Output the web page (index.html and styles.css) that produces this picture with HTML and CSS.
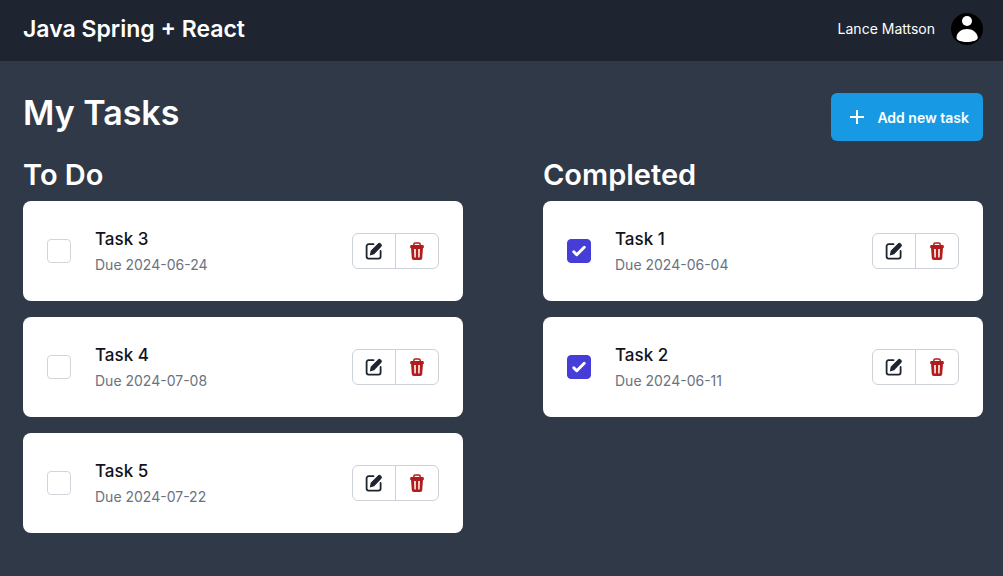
FILE: index.html
```html
<!DOCTYPE html>
<html lang="en">
<head>
  <meta charset="UTF-8" />
  <meta name="viewport" content="width=device-width, initial-scale=1.0"/>
  <title>My Tasks</title>
  <link rel="stylesheet" href="styles.css">
</head>
<body>
  <!-- shared icons -->
  <svg class="icon-defs" aria-hidden="true">
    <symbol id="icon-edit" viewBox="0 0 18 18">
      <path d="M8.500 2.200H3.600a2 2 0 0 0-2 2v10.400a2 2 0 0 0 2 2h10a2 2 0 0 0 2-2V9" fill="none" stroke="currentColor" stroke-width="1.800" stroke-linecap="round"/>
      <path d="M4.800 13.400l.9-4.600L13 1.500a1.900 1.900 0 0 1 2.700 0l.6.600a1.900 1.900 0 0 1 0 2.700L9.200 12.200z" fill="currentColor"/>
    </symbol>
    <symbol id="icon-trash" viewBox="0 0 18 18">
      <path d="M5.800 3.500V2.500A1.500 1.500 0 0 1 7.300 1h3.400a1.500 1.500 0 0 1 1.500 1.500v1" fill="none" stroke="currentColor" stroke-width="1.500"/>
      <path d="M3.200 3h11.600a1 1 0 0 1 1 1v2H2.200V4a1 1 0 0 1 1-1z" fill="currentColor"/>
      <path fill-rule="evenodd" d="M3 5.500h12l-.8 10.700a2 2 0 0 1-2 1.800H5.800a2 2 0 0 1-2-1.800zM6.100 7l.3 8.500h1.400V7zM10.200 7v8.500h1.400L11.900 7z" fill="currentColor"/>
    </symbol>
  </svg>

  <header class="navbar">
    <h1 class="brand">Java Spring + React</h1>
    <div class="user">
      <span>Lance Mattson</span>
      <svg class="avatar" viewBox="0 0 32 32" aria-hidden="true">
        <circle cx="16" cy="16" r="16" fill="#000"/>
        <circle cx="16" cy="8" r="5" fill="#fff"/>
        <path d="M5.500 24.500C6 19 10.500 16 16 16s10 3 10.800 8.500C27 27.500 21 29 16 29S5.200 27.500 5.500 24.500z" fill="#fff"/>
      </svg>
    </div>
  </header>

  <main class="page">
    <div class="page-header">
      <h2 class="page-title">My Tasks</h2>
      <button type="button" class="add-button">
        <svg class="plus" viewBox="0 0 24 24" aria-hidden="true"><path d="M12 5v14M5 12h14" fill="none" stroke="currentColor" stroke-width="2"/></svg>
        Add new task
      </button>
    </div>

    <div class="board">
      <section>
        <h3 class="column-title">To Do</h3>
        <ul class="task-list">
          <li class="task">
            <input type="checkbox" class="task-check" id="task-3">
            <div class="task-info">
              <label class="task-name" for="task-3">Task 3</label>
              <p class="task-due">Due 2024-06-24</p>
            </div>
            <div class="task-actions">
              <button type="button" class="edit" aria-label="Edit Task 3"><svg><use href="#icon-edit"/></svg></button>
              <button type="button" class="delete" aria-label="Delete Task 3"><svg><use href="#icon-trash"/></svg></button>
            </div>
          </li>
          <li class="task">
            <input type="checkbox" class="task-check" id="task-4">
            <div class="task-info">
              <label class="task-name" for="task-4">Task 4</label>
              <p class="task-due">Due 2024-07-08</p>
            </div>
            <div class="task-actions">
              <button type="button" class="edit" aria-label="Edit Task 4"><svg><use href="#icon-edit"/></svg></button>
              <button type="button" class="delete" aria-label="Delete Task 4"><svg><use href="#icon-trash"/></svg></button>
            </div>
          </li>
          <li class="task">
            <input type="checkbox" class="task-check" id="task-5">
            <div class="task-info">
              <label class="task-name" for="task-5">Task 5</label>
              <p class="task-due">Due 2024-07-22</p>
            </div>
            <div class="task-actions">
              <button type="button" class="edit" aria-label="Edit Task 5"><svg><use href="#icon-edit"/></svg></button>
              <button type="button" class="delete" aria-label="Delete Task 5"><svg><use href="#icon-trash"/></svg></button>
            </div>
          </li>
        </ul>
      </section>

      <section>
        <h3 class="column-title">Completed</h3>
        <ul class="task-list">
          <li class="task">
            <input type="checkbox" class="task-check" id="task-1" checked>
            <div class="task-info">
              <label class="task-name" for="task-1">Task 1</label>
              <p class="task-due">Due 2024-06-04</p>
            </div>
            <div class="task-actions">
              <button type="button" class="edit" aria-label="Edit Task 1"><svg><use href="#icon-edit"/></svg></button>
              <button type="button" class="delete" aria-label="Delete Task 1"><svg><use href="#icon-trash"/></svg></button>
            </div>
          </li>
          <li class="task">
            <input type="checkbox" class="task-check" id="task-2" checked>
            <div class="task-info">
              <label class="task-name" for="task-2">Task 2</label>
              <p class="task-due">Due 2024-06-11</p>
            </div>
            <div class="task-actions">
              <button type="button" class="edit" aria-label="Edit Task 2"><svg><use href="#icon-edit"/></svg></button>
              <button type="button" class="delete" aria-label="Delete Task 2"><svg><use href="#icon-trash"/></svg></button>
            </div>
          </li>
        </ul>
      </section>
    </div>
  </main>
</body>
</html>
```
FILE: styles.css
```css
* {
  box-sizing: border-box;
}
body {
  margin: 0;
  font-family: Inter, "Liberation Sans", sans-serif;
  background-color: #303947;
  color: white;
}
h1, h2, h3, p, ul {
  margin: 0;
  padding: 0;
}
button {
  font-family: inherit;
  cursor: pointer;
}
.icon-defs {
  display: none;
}

.navbar {
  display: flex;
  justify-content: space-between;
  align-items: center;
  padding: 13px 20px 16px 23px;
  background-color: #1e2530;
}
.brand {
  font-size: 23px;
  line-height: 32px;
  font-weight: 600;
}
.user {
  display: flex;
  align-items: center;
  gap: 16px;
  font-size: 14px;
  line-height: 20px;
}
.avatar {
  width: 32px;
  height: 32px;
}

.page {
  padding: 32px 20px 32px 23px;
}
.page-header {
  display: flex;
  justify-content: space-between;
  align-items: flex-start;
  margin-bottom: 16px;
}
.page-title {
  font-size: 34px;
  line-height: 40px;
  font-weight: 600;
}
.add-button {
  display: flex;
  align-items: center;
  gap: 8px;
  height: 48px;
  padding: 0 14px;
  border: none;
  border-radius: 6px;
  background-color: #179ae3;
  color: white;
  font-size: 14px;
  font-weight: 600;
}
.plus {
  width: 24px;
  height: 24px;
}

.board {
  display: grid;
  grid-template-columns: 1fr 1fr;
  gap: 80px;
}
.column-title {
  margin-bottom: 8px;
  font-size: 29px;
  line-height: 36px;
  font-weight: 600;
}
.task-list {
  display: flex;
  flex-direction: column;
  gap: 16px;
  list-style: none;
}
.task {
  display: flex;
  align-items: center;
  gap: 24px;
  padding: 24px;
  border-radius: 8px;
  background-color: white;
}
.task-check {
  appearance: none;
  width: 24px;
  height: 24px;
  margin: 0;
  border: 1px solid #d1d5db;
  border-radius: 4px;
  background-color: white;
}
.task-check:checked {
  border-color: #463cd8;
  background: #463cd8 url("data:image/svg+xml,%3Csvg viewBox='0 0 16 16' fill='white' xmlns='http://www.w3.org/2000/svg'%3E%3Cpath d='M12.207 4.793a1 1 0 010 1.414l-5 5a1 1 0 01-1.414 0l-2-2a1 1 0 011.414-1.414L6.500 9.086l4.293-4.293a1 1 0 011.414 0z'/%3E%3C/svg%3E") center / 24px no-repeat;
}
.task-info {
  flex: 1;
}
.task-name {
  display: block;
  color: #111420;
  font-size: 17px;
  line-height: 28px;
  font-weight: 500;
}
.task-due {
  color: #6b7280;
  font-size: 14px;
  line-height: 24px;
}
.task-actions {
  display: flex;
  border: 1px solid #cdd1d8;
  border-radius: 6px;
}
.task-actions button {
  display: flex;
  padding: 8px 12px;
  border: none;
  background: none;
}
.task-actions svg {
  width: 18px;
  height: 18px;
}
.task-actions .edit {
  border-right: 1px solid #cdd1d8;
  color: #1e2530;
}
.task-actions .delete {
  color: #b41c1c;
}
```
